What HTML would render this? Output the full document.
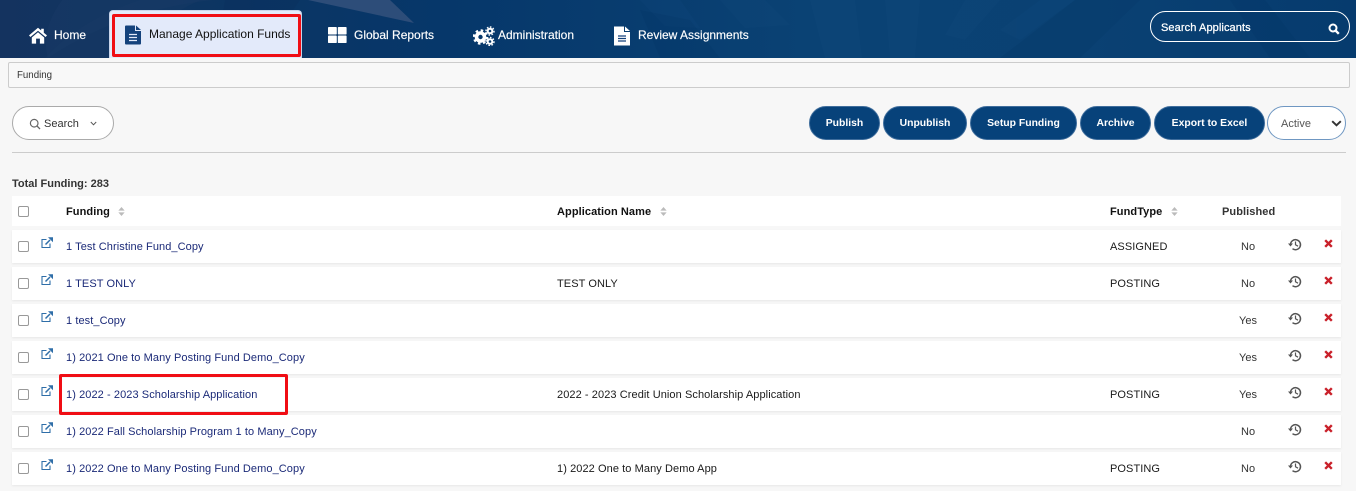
<!DOCTYPE html>
<html><head><meta charset="utf-8">
<style>
html,body{margin:0;padding:0;width:1356px;height:491px;overflow:hidden;background:#f7f7f7;font-family:"Liberation Sans",Arial,sans-serif;color:#222}
.abs,.t{position:absolute}
.t{white-space:nowrap;line-height:14px}
#hdr{position:absolute;left:0;top:0;width:1356px;height:58px;overflow:hidden}
.nav{color:#fff;font-size:12px;-webkit-text-stroke:.15px #fff}
.btn{position:absolute;top:106px;height:34px;border-radius:17px;background:#07427a;border:1px solid #3f6d9c;box-sizing:border-box;color:#fff;font-size:10.4px;font-weight:bold;text-align:center;line-height:34px}
.row{position:absolute;left:12px;width:1329px;height:33px;background:#fff;box-shadow:0 1px 2px #e8e8e8}
.cb{position:absolute;left:18px;width:9px;height:9px;border:1px solid #999;border-radius:2px;background:#fff}
.c{font-size:11px;color:#1a1a1a;letter-spacing:.08px}
.l{font-size:11px;color:#1b2a78;left:66px;letter-spacing:.08px}
.h{font-size:11px;font-weight:bold;color:#111;top:205px;letter-spacing:.08px}
.p{left:1241px;font-size:11px;color:#333}
.y{left:1239px;font-size:11px;color:#333}
.ex{left:41px}
.hi{left:1288px}
.xx{left:1324px}
</style></head><body>
<svg width="0" height="0" style="position:absolute">
<symbol id="ext" viewBox="0 0 12 12"><path d="M5.500 2.500H1V10.500H9V6.500" fill="none" stroke="#2f6ea8" stroke-width="1.100"/><path d="M4.500 7.500 9 3" fill="none" stroke="#2f6ea8" stroke-width="1.500"/><path d="M7 .3H12V5.300Z" fill="#2f6ea8"/></symbol>
<symbol id="his" viewBox="0 0 14 13"><path d="M2.500 6.500A5 5 0 1 1 4.500 10.700" fill="none" stroke="#555" stroke-width="1.500"/><path d="M0 5.500H5L2.500 8.500Z" fill="#555"/><path d="M7.500 3.500V6.800L10 8.200" fill="none" stroke="#555" stroke-width="1.200"/></symbol>
<symbol id="xx" viewBox="0 0 9 9"><path d="M1.200 1.200 7.800 7.800M7.800 1.200 1.200 7.800" stroke="#c9202a" stroke-width="2.400"/></symbol>
<symbol id="srt" viewBox="0 0 7 10"><path d="M3.500 0 7 4H0ZM0 6H7L3.500 10Z" fill="#bbb"/></symbol>
<linearGradient id="bg" x1="0" x2="1" y1="0" y2="0"><stop offset="0" stop-color="#14335f"/><stop offset=".15" stop-color="#0d3562"/><stop offset=".33" stop-color="#06376a"/><stop offset=".6" stop-color="#0a4274"/><stop offset=".8" stop-color="#0a4173"/><stop offset="1" stop-color="#063b6e"/></linearGradient>
</svg>
<div id="hdr">
<svg width="1356" height="58" style="position:absolute;left:0;top:0">
<rect width="1356" height="58" fill="url(#bg)"/>
<path d="M62 0H213Q120 10 48 58Q40 30 62 0Z" fill="#173a66" opacity=".5"/>
<path d="M45 58Q80 20 140 0H200Q140 30 110 58Z" fill="#1b3c68" opacity=".35"/>
<polygon points="308,0 390,0 414,23" fill="#2d4d79"/>
<polygon points="225,0 300,0 260,58 215,58" fill="#0a305c" opacity=".4"/>
<g fill="#1a5288" opacity=".13">
<polygon points="640,0 680,0 700,28 665,26"/>
<polygon points="720,0 765,0 790,25 745,28"/>
<polygon points="810,0 855,0 862,58 825,58"/>
<polygon points="885,0 920,0 915,58 890,58"/>
<polygon points="965,0 1000,0 965,40 945,35"/>
<polygon points="1040,0 1075,0 1020,40 1000,30"/>
</g>
<g fill="#03305f" opacity=".15">
<polygon points="660,58 720,58 690,20 640,10"/>
<polygon points="1000,58 1050,58 1105,0 1075,0"/>
<polygon points="1230,0 1265,0 1310,58 1270,58"/>
<polygon points="1100,0 1140,0 1080,58 1050,58"/>
</g>
</svg>
</div>
<div class="abs" style="left:109px;top:10px;width:193px;height:48px;background:#e3eafa;border-radius:4px 4px 0 0;box-sizing:border-box;border:1px solid #c8d4ea;border-bottom:0"></div>
<div class="abs" style="left:112px;top:14px;width:189px;height:43px;border:3px solid #f00d14;box-sizing:border-box;border-radius:2px"></div>

<svg class="abs" style="left:29px;top:27px" width="18" height="17" viewBox="0 0 18 17"><path d="M9 .8 0 8.400 1.400 10 9 3.800 16.600 10 18 8.400 14.800 5.700V1.800H12.200V3.500Z" fill="#fff"/><path d="M2.800 10.500 9 5.300 15.200 10.500V16.600H10.900V11.600H7.100V16.600H2.800Z" fill="#fff"/></svg>
<div class="t nav" style="left:54px;top:28px">Home</div>

<svg class="abs" style="left:124px;top:25px" width="18" height="20" viewBox="0 0 18 20"><path d="M1 1.500Q1 .5 2 .5H11V6H17V18.500Q17 19.500 16 19.500H2Q1 19.500 1 18.500Z" fill="#14427c"/><path d="M12 .5 17 5H12Z" fill="#14427c"/><path d="M5 9.500H13M5 12.500H13M5 15.500H13" stroke="#e3eafa" stroke-width="1.300"/></svg>
<div class="t" style="left:149px;top:27px;font-size:12px;color:#111">Manage Application Funds</div>

<svg class="abs" style="left:328px;top:27px" width="19" height="16" viewBox="0 0 19 16" fill="#fff"><rect width="8.800" height="7.500" rx=".8"/><rect x="9.800" width="8.800" height="7.500" rx=".8"/><rect y="8.500" width="8.800" height="7.500" rx=".8"/><rect x="9.800" y="8.500" width="8.800" height="7.500" rx=".8"/></svg>
<div class="t nav" style="left:354px;top:28px">Global Reports</div>

<svg class="abs" style="left:473px;top:26px" width="22" height="20" viewBox="0 0 22 20"><circle cx="7.500" cy="11" r="4" fill="none" stroke="#fff" stroke-width="3.600"/><circle cx="7.500" cy="11" r="6.500" fill="none" stroke="#fff" stroke-width="2.400" stroke-dasharray="2.500 2.600"/><circle cx="17" cy="5" r="2.300" fill="none" stroke="#fff" stroke-width="2"/><circle cx="17" cy="5" r="4" fill="none" stroke="#fff" stroke-width="1.400" stroke-dasharray="1.600 1.500"/><circle cx="17" cy="15.500" r="2.300" fill="none" stroke="#fff" stroke-width="2"/><circle cx="17" cy="15.500" r="4" fill="none" stroke="#fff" stroke-width="1.400" stroke-dasharray="1.600 1.500"/></svg>
<div class="t nav" style="left:498px;top:28px">Administration</div>

<svg class="abs" style="left:613px;top:26px" width="18" height="20" viewBox="0 0 18 20"><path d="M1 .5H11V6H17V19.500H1Z" fill="#fff"/><path d="M12 .5 17 5H12Z" fill="#fff"/><path d="M5 10H13M5 12.500H13M5 15H13" stroke="#14427c" stroke-width="1.200"/></svg>
<div class="t nav" style="left:638px;top:28px">Review Assignments</div>

<div class="abs" style="left:1150px;top:11px;width:200px;height:31px;border:1px solid #fff;border-radius:16px;box-sizing:border-box"></div>
<div class="t" style="left:1161px;top:21px;font-size:11px;letter-spacing:.1px;color:#fff;-webkit-text-stroke:.25px #fff">Search Applicants</div>
<svg class="abs" style="left:1328px;top:23px" width="12" height="12" viewBox="0 0 12 12"><circle cx="5" cy="5" r="3.500" fill="none" stroke="#fff" stroke-width="2"/><path d="M7.500 7.500 10.800 10.800" stroke="#fff" stroke-width="2.400"/></svg>

<div class="abs" style="left:8px;top:62px;width:1342px;height:26px;border:1px solid #ccc;border-radius:2px;box-sizing:border-box;background:#f8f8f8"></div>
<div class="t" style="left:17px;top:69px;font-size:9.700px;color:#333">Funding</div>

<div class="abs" style="left:12px;top:106px;width:102px;height:34px;border:1px solid #aaa;border-radius:17px;background:#fff;box-sizing:border-box"></div>
<svg class="abs" style="left:29px;top:118px" width="12" height="12" viewBox="0 0 12 12"><circle cx="5.200" cy="5.200" r="3.800" fill="none" stroke="#666" stroke-width="1.200"/><path d="M8 8 11 11" stroke="#666" stroke-width="1.300"/></svg>
<div class="t" style="left:44px;top:117px;font-size:11px;color:#333">Search</div>
<svg class="abs" style="left:90px;top:121px" width="7" height="5" viewBox="0 0 7 5"><path d="M.8 1 3.500 3.800 6.200 1" fill="none" stroke="#555" stroke-width="1"/></svg>

<div class="btn" style="left:809px;width:71px">Publish</div>
<div class="btn" style="left:883px;width:84px">Unpublish</div>
<div class="btn" style="left:970px;width:107px">Setup Funding</div>
<div class="btn" style="left:1080px;width:71px">Archive</div>
<div class="btn" style="left:1154px;width:111px">Export to Excel</div>
<div class="abs" style="left:1267px;top:106px;width:79px;height:34px;border:1px solid #6f97c2;border-radius:17px;background:#fff;box-sizing:border-box"></div>
<div class="t" style="left:1281px;top:117px;font-size:11px;color:#555">Active</div>
<svg class="abs" style="left:1331px;top:120px" width="11" height="7" viewBox="0 0 11 7"><path d="M1.200 1.200 5.500 5.300 9.800 1.200" fill="none" stroke="#333" stroke-width="2"/></svg>
<div class="abs" style="left:12px;top:152px;width:1334px;height:1px;background:#ccc"></div>

<div class="t" style="left:12px;top:177px;font-size:11px;font-weight:bold;color:#333">Total Funding: 283</div>

<div class="abs" style="left:12px;top:196px;width:1329px;height:30px;background:#fff"></div>
<div class="cb" style="top:206px"></div>
<div class="t h" style="left:66px">Funding</div>
<div class="t h" style="left:557px">Application Name</div>
<div class="t h" style="left:1110px">FundType</div>
<div class="t h" style="left:1222px;color:#333">Published</div>
<svg class="abs" style="left:118px;top:207px" width="7" height="9"><use href="#srt"/></svg>
<svg class="abs" style="left:660px;top:207px" width="7" height="9"><use href="#srt"/></svg>
<svg class="abs" style="left:1171px;top:207px" width="7" height="9"><use href="#srt"/></svg>

<div class="row" style="top:230px"></div>
<div class="cb" style="top:241px"></div>
<svg class="abs ex" style="top:237px" width="12" height="12"><use href="#ext"/></svg>
<div class="t l" style="top:240px">1 Test Christine Fund_Copy</div>
<div class="t c" style="left:1110px;top:240px">ASSIGNED</div>
<div class="t p" style="top:240px">No</div>
<svg class="abs hi" style="top:238px" width="14" height="13"><use href="#his"/></svg>
<svg class="abs xx" style="top:239px" width="9" height="9"><use href="#xx"/></svg>

<div class="row" style="top:267px"></div>
<div class="cb" style="top:278px"></div>
<svg class="abs ex" style="top:274px" width="12" height="12"><use href="#ext"/></svg>
<div class="t l" style="top:277px">1 TEST ONLY</div>
<div class="t c" style="left:557px;top:277px">TEST ONLY</div>
<div class="t c" style="left:1110px;top:277px">POSTING</div>
<div class="t p" style="top:277px">No</div>
<svg class="abs hi" style="top:275px" width="14" height="13"><use href="#his"/></svg>
<svg class="abs xx" style="top:276px" width="9" height="9"><use href="#xx"/></svg>

<div class="row" style="top:304px"></div>
<div class="cb" style="top:315px"></div>
<svg class="abs ex" style="top:311px" width="12" height="12"><use href="#ext"/></svg>
<div class="t l" style="top:314px">1 test_Copy</div>
<div class="t y" style="top:314px">Yes</div>
<svg class="abs hi" style="top:312px" width="14" height="13"><use href="#his"/></svg>
<svg class="abs xx" style="top:313px" width="9" height="9"><use href="#xx"/></svg>

<div class="row" style="top:341px"></div>
<div class="cb" style="top:352px"></div>
<svg class="abs ex" style="top:348px" width="12" height="12"><use href="#ext"/></svg>
<div class="t l" style="top:351px">1) 2021 One to Many Posting Fund Demo_Copy</div>
<div class="t y" style="top:351px">Yes</div>
<svg class="abs hi" style="top:349px" width="14" height="13"><use href="#his"/></svg>
<svg class="abs xx" style="top:350px" width="9" height="9"><use href="#xx"/></svg>

<div class="row" style="top:378px"></div>
<div class="cb" style="top:389px"></div>
<svg class="abs ex" style="top:385px" width="12" height="12"><use href="#ext"/></svg>
<div class="t l" style="top:388px">1) 2022 - 2023 Scholarship Application</div>
<div class="t c" style="left:557px;top:388px">2022 - 2023 Credit Union Scholarship Application</div>
<div class="t c" style="left:1110px;top:388px">POSTING</div>
<div class="t y" style="top:388px">Yes</div>
<svg class="abs hi" style="top:386px" width="14" height="13"><use href="#his"/></svg>
<svg class="abs xx" style="top:387px" width="9" height="9"><use href="#xx"/></svg>

<div class="row" style="top:415px"></div>
<div class="cb" style="top:426px"></div>
<svg class="abs ex" style="top:422px" width="12" height="12"><use href="#ext"/></svg>
<div class="t l" style="top:425px">1) 2022 Fall Scholarship Program 1 to Many_Copy</div>
<div class="t p" style="top:425px">No</div>
<svg class="abs hi" style="top:423px" width="14" height="13"><use href="#his"/></svg>
<svg class="abs xx" style="top:424px" width="9" height="9"><use href="#xx"/></svg>

<div class="row" style="top:452px"></div>
<div class="cb" style="top:463px"></div>
<svg class="abs ex" style="top:459px" width="12" height="12"><use href="#ext"/></svg>
<div class="t l" style="top:462px">1) 2022 One to Many Posting Fund Demo_Copy</div>
<div class="t c" style="left:557px;top:462px">1) 2022 One to Many Demo App</div>
<div class="t c" style="left:1110px;top:462px">POSTING</div>
<div class="t p" style="top:462px">No</div>
<svg class="abs hi" style="top:460px" width="14" height="13"><use href="#his"/></svg>
<svg class="abs xx" style="top:461px" width="9" height="9"><use href="#xx"/></svg>

<div class="abs" style="left:59px;top:374px;width:229px;height:41px;border:3px solid #f00d14;box-sizing:border-box;border-radius:2px"></div>
</body></html>
